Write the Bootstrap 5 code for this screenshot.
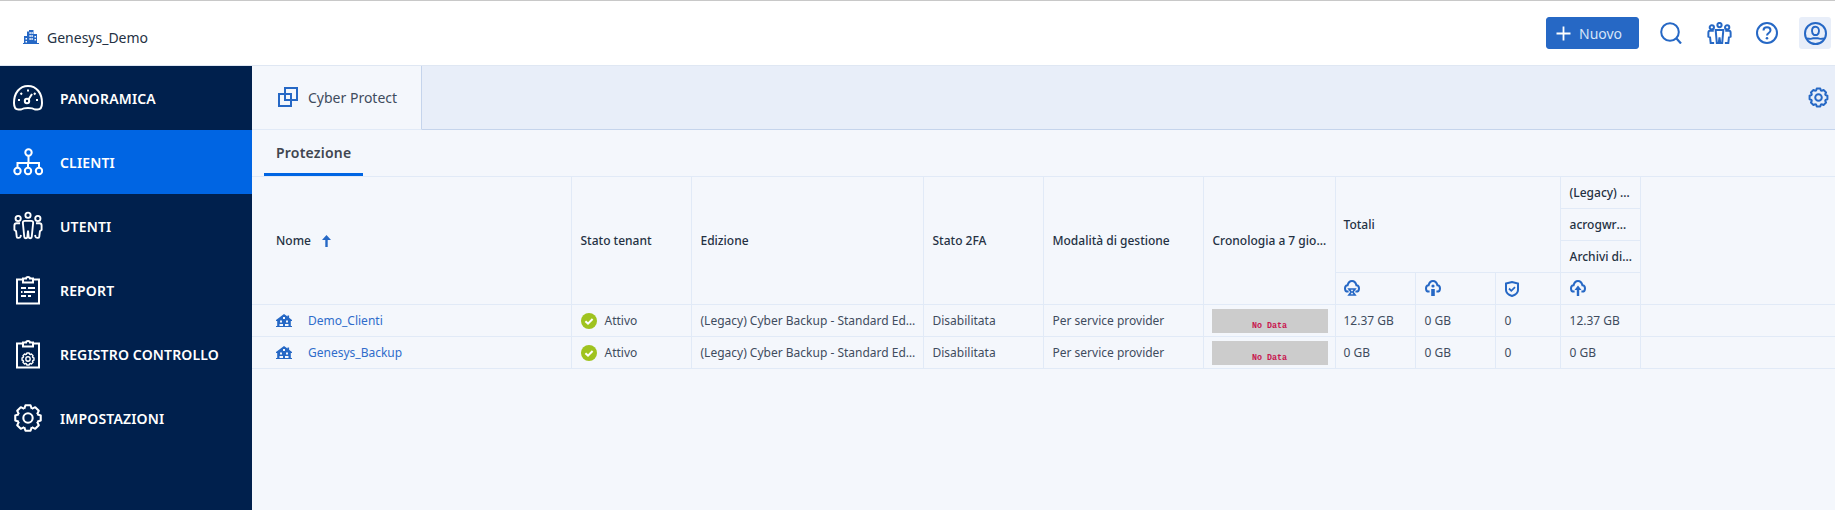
<!DOCTYPE html>
<html lang="it">
<head>
<meta charset="utf-8">
<title>Cyber Protect</title>
<link href="https://cdn.jsdelivr.net/npm/bootstrap@5.3.0/dist/css/bootstrap.min.css" rel="stylesheet">
<style>
:root{--ink:#243143;--brand:#2668c5;--line:#e1eaf7;--pale:#e8eef9;--wash:#f4f7fc;}
html,body{height:510px;overflow:hidden;}
body{font-family:"Noto Sans","Open Sans",sans-serif;font-size:12px;color:var(--ink);background:var(--wash);}
.shell{height:510px;}
.topbar{height:66px;background:#fff;border-top:1px solid #c8c8c8;border-bottom:1px solid #dfe7f3;padding-left:23px;padding-right:4px;}
.tenant-block{padding-top:8px;}
.tenant{font-size:14px;margin-left:8px;}
.ico-brand{color:var(--brand);display:block;flex:none;}
.new-btn{--bs-btn-bg:var(--brand);--bs-btn-border-color:var(--brand);--bs-btn-color:#d5e4f8;--bs-btn-hover-bg:var(--brand);--bs-btn-hover-color:#d5e4f8;--bs-btn-padding-x:9px;--bs-btn-padding-y:0;--bs-btn-font-size:14px;--bs-btn-border-radius:3px;height:32px;width:93px;margin-right:16px;}
.top-ico{width:32px;height:32px;border-radius:3px;margin-right:16px;}
.top-ico.is-last{margin-right:0;background:var(--pale);}
.side{width:252px;flex:none;background:#00204d;}
.side-link{height:64px;color:#fff;font-size:14px;font-weight:600;letter-spacing:.15px;padding:0 0 0 13px;gap:17px;}
.side-link:hover,.side-link:focus{color:#fff;}
.side-link.is-on{background:#0065e3;}
.side-link svg{flex:none;}
.tabbar{height:64px;background:var(--pale);border-bottom:1px solid #c5d4ec;padding-right:6px;}
.app-tab{width:170px;height:64px;background:var(--wash);border-right:1px solid #c5d4ec;border-bottom:1px solid var(--line);padding-left:26px;gap:10px;font-size:14px;color:#3f4c5e;}
.subnav{height:46px;padding-left:12px;}
.sub-tab{height:46px;width:99px;padding-left:12px;padding-top:12px;font-size:14px;font-weight:600;color:#3f4650;letter-spacing:.2px;border-bottom:3px solid #0065e3;}
.grid-wrap{width:100%;}
.data-grid{--bs-table-bg:transparent;--bs-table-color:var(--ink);--bs-table-border-color:var(--line);table-layout:fixed;width:1583px;border-collapse:collapse;font-size:12px;margin:0;}
.data-grid th,.data-grid td{height:32px;padding:0 7px 0 9px;vertical-align:middle;white-space:nowrap;overflow:hidden;text-overflow:ellipsis;border:solid var(--line);border-width:0 1px 1px 0;line-height:16px;box-shadow:none;}
.data-grid thead tr:first-child th{border-top-width:1px;}
.data-grid th{font-weight:500;}
.data-grid .end{border-right-width:0;}
.data-grid .first{padding-left:24px;}
.data-grid .tot1{padding-left:8px;}
.data-grid td{color:#3f4c5e;}
.data-grid .spark-cell{padding:0 7px 0 8px;}
.sort-mark{color:var(--brand);margin-left:8px;vertical-align:-2px;}
.row-name{gap:16px;}
.tenant-link{color:#2f6ccb;text-decoration:none;}
.state-ok{gap:8px;}
.spark{height:24px;background:#ccc;color:#c8174f;font:700 8.4px/10px "Liberation Mono",monospace;padding-bottom:2px;}
.c1{width:319px}.c2{width:120px}.c3{width:232px}.c4{width:120px}.c5{width:160px}.c6{width:132px}.c7{width:80px}.c8{width:80px}.c9{width:65px}.c10{width:80px}.c11{width:195px}
.side-clip{position:relative;width:30px;height:30px;flex:none;}
.gear-over{position:absolute;left:8px;top:13px;}
</style>
</head>
<body>
<svg class="d-none" aria-hidden="true">
<symbol id="gear" viewBox="0 0 32 32">
<g fill="none" stroke="currentColor" stroke-linejoin="round">
<path id="gear-t" d="M11.98 6.3 13.3 2.400h5.400l1.320 3.900"/>
<use href="#gear-t" transform="rotate(45 16 16)"/><use href="#gear-t" transform="rotate(90 16 16)"/><use href="#gear-t" transform="rotate(135 16 16)"/><use href="#gear-t" transform="rotate(180 16 16)"/><use href="#gear-t" transform="rotate(225 16 16)"/><use href="#gear-t" transform="rotate(270 16 16)"/><use href="#gear-t" transform="rotate(315 16 16)"/>
<circle cx="16" cy="16" r="5"/>
</g>
</symbol>
<symbol id="home" viewBox="0 0 16 13">
<path fill="currentColor" fill-rule="evenodd" d="M8 0 11.500 2.600V1.500h1.600v2.300L16 6v1h-1.200v5H16v1H0v-1h1.200V7H0V6zM7 3v2h2V3zM4 6.500v2h2v-2zm6 0v2h2v-2zm-6.500 3.500v2h3.500v-2zm5.500 0v2h3.500v-2z"/>
</symbol>
<symbol id="ok" viewBox="0 0 16 16">
<circle cx="8" cy="8" r="8" fill="#9fc31f"/><path d="M4.400 8.200 7 10.600l4.600-4.600" fill="none" stroke="#fff" stroke-width="2"/>
</symbol>
<symbol id="cloud" viewBox="0 0 16 17">
<path fill="none" stroke="currentColor" stroke-width="2" d="M4.600 11.600H3.800C2 11.600 1 10.200 1 8.400c0-1.700 1-3 2.600-3.100C4.200 2.800 5.900 1 8 1s3.800 1.800 4.400 4.300c1.600.1 2.600 1.400 2.600 3.100 0 1.800-1 3.200-2.800 3.200h-.8"/>
</symbol>
</svg>
<div class="shell d-flex flex-column">
<header class="topbar d-flex align-items-center flex-none">
<div class="tenant-block d-flex align-items-center">
<svg class="ico-brand" width="16" height="14" viewBox="0 0 16 14" aria-hidden="true"><path fill="currentColor" fill-rule="evenodd" d="M4 1.500h2V0h4.500v4H14v9h2v1H0v-1h1V6h3zM6.500 2v2h1.200V2zm2 0v2h1.200V2zm-2 3v2h1.200V5zm2 0v2h1.200V5zm-2 3v2h1.200V8zm2 0v2h1.200V8zM2.500 8v1.500H4V8zm0 3v1.500H4V11zm9-5v1.500H13V6zm0 3v1.500H13V9z"/></svg>
<span class="tenant">Genesys_Demo</span>
</div>
<div class="ms-auto d-flex align-items-center">
<button type="button" class="btn new-btn d-flex align-items-center gap-2">
<svg width="15" height="15" viewBox="0 0 15 15" aria-hidden="true"><path d="M7.500.5v14M.5 7.500h14" stroke="#fff" stroke-width="1.800"/></svg>
<span>Nuovo</span>
</button>
<div class="top-ico d-flex align-items-center justify-content-center"><svg class="ico-brand" width="22" height="22" viewBox="0 0 22 22" aria-hidden="true"><circle cx="10" cy="10" r="8.800" fill="none" stroke="currentColor" stroke-width="2"/><path d="M16.500 16.500 21 21.500" stroke="currentColor" stroke-width="2.200"/></svg></div>
<div class="top-ico d-flex align-items-center justify-content-center"><svg class="ico-brand" width="25" height="23" viewBox="0 0 32 30" aria-hidden="true"><g fill="none" stroke="currentColor" stroke-width="2.600"><circle cx="16" cy="4" r="2.800"/><circle cx="6" cy="7" r="2.800"/><circle cx="26" cy="7" r="2.800"/><path d="M11 10.500h10l-1.500 17h-2.500L16 20l-1 7.500h-2.500zM8.500 11.500H3.500C2 11.500 1.500 13 1.500 14v5l2.200 1 .8 7.500h4.500M23.500 11.500h5c1.500 0 2 1.500 2 2.500v5l-2.200 1-.8 7.500H23"/></g></svg></div>
<div class="top-ico d-flex align-items-center justify-content-center"><svg class="ico-brand" width="22" height="22" viewBox="0 0 22 22" aria-hidden="true"><circle cx="11" cy="11" r="10" fill="none" stroke="currentColor" stroke-width="2"/><path d="M7.500 8.500C7.500 6.500 9 5.300 11 5.300s3.500 1.200 3.500 3c0 2.700-3.500 2.600-3.500 5.200" fill="none" stroke="currentColor" stroke-width="2"/><circle cx="11" cy="16.300" r="1.300" fill="currentColor"/></svg></div>
<div class="top-ico is-last d-flex align-items-center justify-content-center"><svg class="ico-brand" width="23" height="23" viewBox="0 0 23 23" aria-hidden="true"><circle cx="11.500" cy="11.500" r="10.500" fill="none" stroke="currentColor" stroke-width="2"/><path d="M8 9c0-2.500 1.500-4.200 3.500-4.200S15 6.500 15 9c0 2-1 3.300-2 4h-3c-1-.7-2-2-2-4zM3 16.500c2 .4 4.500.8 6-.2h5c1.500 1 4 .6 6 .2" fill="none" stroke="currentColor" stroke-width="1.900"/></svg></div>
</div>
</header>
<div class="d-flex flex-grow-1">
<nav class="side nav flex-column flex-nowrap">
<a class="nav-link side-link d-flex align-items-center" href="#"><svg width="30" height="30" viewBox="0 0 30 30" fill="none" stroke="currentColor" stroke-width="2" aria-hidden="true"><path d="M8 26.500H5.500C2.500 26.500 1 24 1 20 1 10 6.500 3 15 3s14 7 14 17c0 4-1.500 6.500-4.500 6.500H22c-1.500-1-3.500-1.500-7-1.500s-5.500.5-7 1.500z"/><circle cx="14" cy="18" r="2.200"/><path d="M15.500 16.500 19 11M5 17h2M23 17h2M7.500 10l1.500 1.500M22.500 10 21 11.500M15 6.500v2"/></svg><span>PANORAMICA</span></a>
<a class="nav-link side-link is-on d-flex align-items-center" href="#"><svg width="30" height="30" viewBox="0 0 30 30" fill="none" stroke="currentColor" stroke-width="2" aria-hidden="true"><circle cx="15.500" cy="5.500" r="3.200"/><circle cx="4.500" cy="24" r="3.200"/><circle cx="15" cy="24" r="3.200"/><circle cx="26" cy="24" r="3.200"/><path d="M15.500 9v7M4.500 20.500V16h21.500v4.500M15 16v4.500"/></svg><span>CLIENTI</span></a>
<a class="nav-link side-link d-flex align-items-center" href="#"><svg width="30" height="30" viewBox="0 0 32 30" fill="none" stroke="currentColor" stroke-width="2" aria-hidden="true"><circle cx="16" cy="3.500" r="2.800"/><circle cx="5.500" cy="7" r="2.800"/><circle cx="26.500" cy="7" r="2.800"/><path d="M10.500 11.500c0-1 1-2 2-2h7c1 0 2 1 2 2l-1.500 15c0 2-3 2-3.300 0L16 20l-.7 6.500c-.3 2-3.300 2-3.300 0zM7.500 12H4C2.500 12 1.500 13 1.500 14.500v4.500l1.800 1.500.7 6c.2 1.500 3.500 1.500 4 0l.5-2M24.500 12H28c1.500 0 2.500 1 2.500 2.500v4.500l-1.800 1.500-.7 6c-.2 1.500-3.500 1.500-4 0l-.5-2"/></svg><span>UTENTI</span></a>
<a class="nav-link side-link d-flex align-items-center" href="#"><svg width="30" height="30" viewBox="0 0 30 30" fill="none" stroke="currentColor" stroke-width="2" aria-hidden="true"><path d="M10 4.500H4v24h22v-24h-6M10 7.500V3.500h3c0-2 4-2 4 0h3v4z"/><path d="M8 13h5M15 13h7M11 17h11M8 17h1.500M8 21h5M15 21h3"/></svg><span>REPORT</span></a>
<a class="nav-link side-link d-flex align-items-center" href="#"><span class="side-clip"><svg width="30" height="30" viewBox="0 0 30 30" fill="none" stroke="currentColor" stroke-width="2" aria-hidden="true"><path d="M10 4.500H4v24h22v-24h-6M10 7.500V3.500h3c0-2 4-2 4 0h3v4z"/></svg><svg class="gear-over" width="14" height="14" aria-hidden="true"><use href="#gear" stroke-width="3.200"/></svg></span><span>REGISTRO CONTROLLO</span></a>
<a class="nav-link side-link d-flex align-items-center" href="#"><svg width="30" height="30" aria-hidden="true"><use href="#gear" stroke-width="2.200"/></svg><span>IMPOSTAZIONI</span></a>
</nav>
<main class="flex-grow-1 d-flex flex-column">
<div class="tabbar d-flex align-items-center justify-content-between">
<div class="app-tab d-flex align-items-center">
<svg class="ico-brand" width="20" height="20" viewBox="0 0 20 20" fill="none" stroke="currentColor" stroke-width="2" aria-hidden="true"><path d="M1 7h12v12H1zM7 1h12v12H7z"/></svg>
<span>Cyber Protect</span>
</div>
<svg class="ico-brand" width="21" height="21" aria-hidden="true"><use href="#gear" stroke-width="3"/></svg>
</div>
<div class="subnav d-flex"><div class="sub-tab">Protezione</div></div>
<div class="grid-wrap">
<table class="table data-grid">
<colgroup><col class="c1"><col class="c2"><col class="c3"><col class="c4"><col class="c5"><col class="c6"><col class="c7"><col class="c8"><col class="c9"><col class="c10"><col class="c11"></colgroup>
<thead>
<tr>
<th rowspan="4" class="first">Nome <svg class="sort-mark" width="9" height="12" viewBox="0 0 9 12" aria-hidden="true"><path d="M4.500 0 9 5H5.700v7H3.300V5H0z" fill="currentColor"/></svg></th>
<th rowspan="4">Stato tenant</th>
<th rowspan="4">Edizione</th>
<th rowspan="4">Stato 2FA</th>
<th rowspan="4">Modalità di gestione</th>
<th rowspan="4">Cronologia a 7 giorni</th>
<th rowspan="3" colspan="3" class="tot1">Totali</th>
<th>(Legacy) Cyber Backup</th>
<th rowspan="4" class="end"></th>
</tr>
<tr><th>acrogwrd_backup</th></tr>
<tr><th>Archivi di backup</th></tr>
<tr>
<th class="tot1"><svg class="ico-brand" width="16" height="17" aria-hidden="true"><use href="#cloud"/><path d="M5 9h6L8.800 12 11 15H5l2.200-3z" fill="none" stroke="currentColor" stroke-width="1.700"/></svg></th>
<th><svg class="ico-brand" width="16" height="17" aria-hidden="true"><use href="#cloud"/><circle cx="8" cy="6" r="1.600" fill="currentColor"/><path d="M6.200 9h3.600v7H6.200z" fill="currentColor"/></svg></th>
<th><svg class="ico-brand" width="14" height="16" viewBox="0 0 14 16" aria-hidden="true"><path d="M1 2.500 7 1l6 1.500V9c0 3-3 5-6 6-3-1-6-3-6-6z" fill="none" stroke="currentColor" stroke-width="2"/><path d="M4 7.500l2.300 2.300L10 6.200" fill="none" stroke="currentColor" stroke-width="1.800"/></svg></th>
<th><svg class="ico-brand" width="16" height="17" aria-hidden="true"><use href="#cloud"/><path d="M8 5.500 11.500 10H9.200v6H6.800v-6H4.500z" fill="currentColor"/></svg></th>
</tr>
</thead>
<tbody>
<tr>
<td class="first"><div class="row-name d-flex align-items-center"><svg class="ico-brand" width="16" height="13" aria-hidden="true"><use href="#home"/></svg><a class="tenant-link" href="#">Demo_Clienti</a></div></td>
<td><div class="state-ok d-flex align-items-center"><svg width="16" height="16" aria-hidden="true"><use href="#ok"/></svg><span>Attivo</span></div></td>
<td>(Legacy) Cyber Backup - Standard Edition</td>
<td>Disabilitata</td>
<td>Per service provider</td>
<td class="spark-cell"><div class="spark d-flex align-items-end justify-content-center">No Data</div></td>
<td class="tot1">12.37 GB</td><td>0 GB</td><td>0</td><td>12.37 GB</td><td class="end"></td>
</tr>
<tr>
<td class="first"><div class="row-name d-flex align-items-center"><svg class="ico-brand" width="16" height="13" aria-hidden="true"><use href="#home"/></svg><a class="tenant-link" href="#">Genesys_Backup</a></div></td>
<td><div class="state-ok d-flex align-items-center"><svg width="16" height="16" aria-hidden="true"><use href="#ok"/></svg><span>Attivo</span></div></td>
<td>(Legacy) Cyber Backup - Standard Edition</td>
<td>Disabilitata</td>
<td>Per service provider</td>
<td class="spark-cell"><div class="spark d-flex align-items-end justify-content-center">No Data</div></td>
<td class="tot1">0 GB</td><td>0 GB</td><td>0</td><td>0 GB</td><td class="end"></td>
</tr>
</tbody>
</table>
</div>
</main>
</div>
</div>
<script src="https://cdn.jsdelivr.net/npm/bootstrap@5.3.0/dist/js/bootstrap.bundle.min.js"></script>
</body>
</html>
